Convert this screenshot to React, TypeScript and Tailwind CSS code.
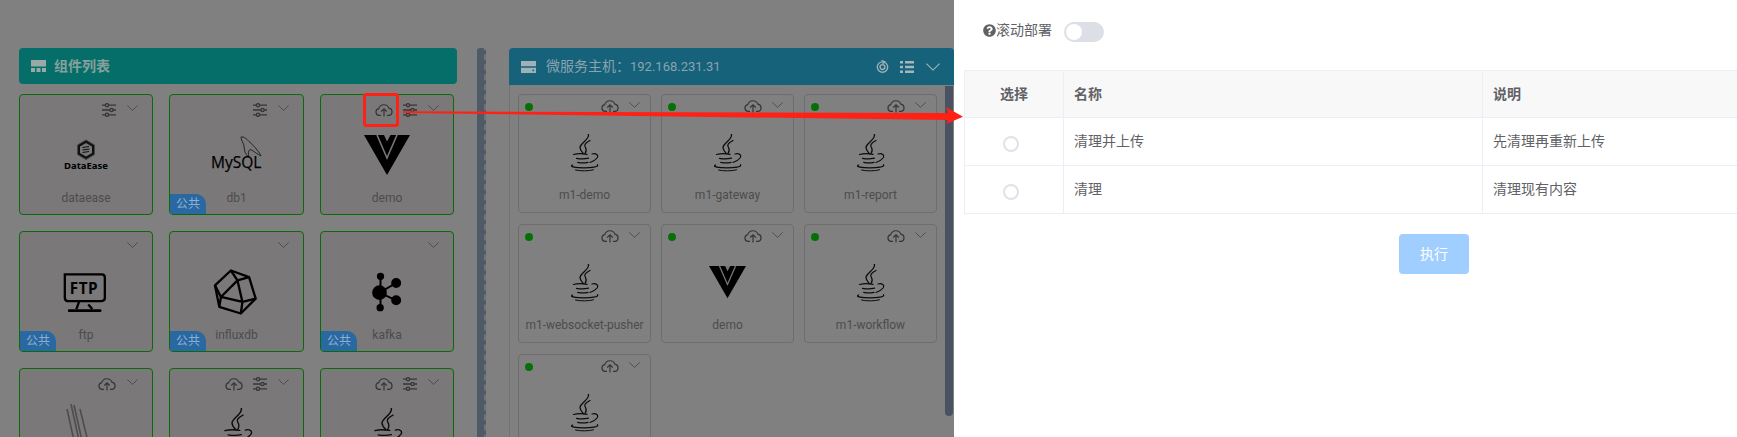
import { FaQuestionCircle } from 'react-icons/fa'

const font = 'font-["Roboto","Noto_Sans_CJK_SC",sans-serif]'

function Cloud({ className = 'w-[18px] h-[14px]' }: { className?: string }) {
    return (
        <svg viewBox="0 0 24 18" className={className} fill="none" stroke="#363636" strokeWidth="1.6">
            <path d="M8 16.2H5.5A4.6 4.6 0 0 1 5 7.1 7.2 7.2 0 0 1 18.6 6.6 4.9 4.9 0 0 1 19 16.2H16" />
            <path d="M12 17.5V7.5M8.3 11L12 7.3 15.7 11" />
        </svg>
    )
}

function Tune() {
    return (
        <svg viewBox="0 0 14 14" className="w-[14px] h-[14px]" fill="none" stroke="#363636" strokeWidth="1.3">
            <path d="M0 2.2H14M0 7H14M0 11.8H14" />
            <circle cx="5" cy="2.2" r="1.6" fill="#777" />
            <circle cx="9.5" cy="7" r="1.6" fill="#777" />
            <circle cx="5" cy="11.8" r="1.6" fill="#777" />
        </svg>
    )
}

function Chevron({ className = 'w-[11px] h-[6px]', color = '#4a4a4a' }: { className?: string; color?: string }) {
    return (
        <svg viewBox="0 0 11 6" className={className} fill="none" stroke={color} strokeWidth="0.9">
            <path d="M0.3 0.4L5.5 5.4 10.7 0.4" />
        </svg>
    )
}

function Java({ w = 29 }: { w?: number }) {
    return (
        <svg viewBox="0 0 29 38" width={w} height={(w * 38) / 29} fill="none" stroke="#0b0b0b" strokeLinecap="round">
            <path strokeWidth="1.3" d="M18.3 0C20.5 5 10 9 10 13.5 10 16 12 18 13.3 19.5" />
            <path strokeWidth="1.2" d="M20 6.5C16 8.5 14 10.5 15 12.5 16 14.5 17.5 16 15 19.5" />
            <path strokeWidth="1.2" d="M3.5 20.5C7 19.6 13 19.6 17 20.3" />
            <path strokeWidth="1.2" d="M6.5 24.3C10 25 15 25 18.5 24.2" />
            <path strokeWidth="1.2" d="M7.7 28.3C11 29 15 29 18 28.3" />
            <path strokeWidth="1.2" d="M22 20C26 18.8 29 21 27 24 25.5 26 23 27.5 20 28.5" />
            <path strokeWidth="1.3" d="M2.5 31C-1 33 6 33.8 14 33.8 21 33.8 29 33 27.5 30.8" />
            <path strokeWidth="1" d="M5.5 36C10 37.2 19 37.2 23.5 35.8" />
        </svg>
    )
}

function Vue({ w = 46 }: { w?: number }) {
    return (
        <svg viewBox="0 0 46 40" width={w} height={(w * 40) / 46}>
            <path d="M0 0H46L23 40Z" fill="#000" />
            <path d="M13 0L23 23 33 0" fill="none" stroke="#777" strokeWidth="1.6" />
            <path d="M20 0L23 6.5 26.5 0Z" fill="#777" />
        </svg>
    )
}

function DataEase() {
    return (
        <svg viewBox="0 0 44 32" width="44" height="32">
            <path d="M22 1L30.5 6V15.5L22 20.5 13.5 15.5V6Z" fill="#111" stroke="#444" strokeWidth="1" />
            <path d="M22 4L28 7.5V14L22 17.5 16 14V7.5Z" fill="#777" />
            <path d="M18.5 8.5L25 7.5M18.5 11L25.5 10M18.5 13.5L25 12.5" stroke="#111" strokeWidth="1.2" />
            <text x="22" y="30" textAnchor="middle" fontSize="9.5" fontWeight="700" fill="#000" className={'font-["Noto_Sans",sans-serif]'}>
                DataEase
            </text>
        </svg>
    )
}

function MySql() {
    return (
        <svg viewBox="0 0 54 38" width="54" height="38">
            <path
                d="M31 1C34 0.5 37 3 39 5.5 42 8 45 11 47 14 49 16 50 18 51 20 49 19 48 18 46 17 44 15.5 42 14 40 13.5 38 15 38 18 39 21 37 20 35 17 34.5 14 34 11 34 9 33 7 32 5 31 3 31 1Z"
                fill="none"
                stroke="#111"
                strokeWidth="0.8"
            />
            <text x="1" y="32" fontSize="15.5" fill="#000" stroke="#000" strokeWidth="0.25" className={'font-["Open_Sans",sans-serif]'}>
                MySQL
            </text>
        </svg>
    )
}

function Ftp() {
    return (
        <svg viewBox="25 15 135 130" width="45" height="43" fill="none" stroke="#000" strokeWidth="7" className="-ml-[4px]">
            <path d="M48 106H42Q33 106 33 96V25H144Q154 25 154 35V97Q154 106 144 106H48" />
            <path d="M76 108L68 130M104 116L116 130" />
            <path d="M46 135H140" strokeWidth="8" strokeLinecap="round" />
            <text x="91" y="84" textAnchor="middle" fontSize="46" fontWeight="700" fill="#000" stroke="none" letterSpacing="2" className={'font-["Open_Sans",sans-serif]'}>
                FTP
            </text>
        </svg>
    )
}

function Influx() {
    return (
        <svg viewBox="470 5 145 150" width="48" height="50" fill="none" stroke="#000" strokeWidth="7" strokeLinejoin="round" className="-ml-[4px]">
            <path d="M530 15L585 35 605 100 560 145 495 125 482 60Z" />
            <path d="M530 15L550 45 585 35M550 45L500 95 482 60M500 95L495 125M500 95L565 110 605 100M565 110L560 145M550 45L565 110" />
        </svg>
    )
}

function Kafka() {
    return (
        <svg viewBox="950 20 95 120" width="32" height="40" fill="#000" stroke="#000" strokeWidth="6">
            <path d="M978 33V127M975 82L1025 53M975 82L1025 105" fill="none" />
            <circle cx="975" cy="82" r="19" />
            <circle cx="978" cy="33" r="8" />
            <circle cx="1025" cy="53" r="12" />
            <circle cx="1025" cy="105" r="12" />
            <circle cx="977" cy="127" r="8" />
        </svg>
    )
}

function Strokes() {
    return (
        <svg viewBox="0 0 26 50" width="26" height="50" fill="none" stroke="#4d4d4d" strokeWidth="1.6" className="mr-[14px]">
            <path d="M1 5L11 50M5 0L16 50M8 1L19 50M14 5L25 50" />
        </svg>
    )
}

type Comp = { id: string; name?: string; logo: React.ReactNode; cloud?: boolean; tune?: boolean; shared?: boolean }

// the last row runs past the bottom of the window, its names are out of view
const components: Comp[] = [
    { id: 'dataease', name: 'dataease', logo: <DataEase />, tune: true },
    { id: 'db1', name: 'db1', logo: <MySql />, tune: true, shared: true },
    { id: 'demo', name: 'demo', logo: <Vue />, cloud: true, tune: true },
    { id: 'ftp', name: 'ftp', logo: <Ftp />, shared: true },
    { id: 'influxdb', name: 'influxdb', logo: <Influx />, shared: true },
    { id: 'kafka', name: 'kafka', logo: <Kafka />, shared: true },
    { id: 'r3a', logo: <Strokes />, cloud: true },
    { id: 'r3b', logo: <Java w={32} />, cloud: true, tune: true },
    { id: 'r3c', logo: <Java w={32} />, cloud: true, tune: true },
]

const services: { id: string; name?: string; logo: React.ReactNode }[] = [
    { id: 's1', name: 'm1-demo', logo: <Java /> },
    { id: 's2', name: 'm1-gateway', logo: <Java /> },
    { id: 's3', name: 'm1-report', logo: <Java /> },
    { id: 's4', name: 'm1-websocket-pusher', logo: <Java /> },
    { id: 's5', name: 'demo', logo: <Vue w={37} /> },
    { id: 's6', name: 'm1-workflow', logo: <Java /> },
    { id: 's7', logo: <Java /> },
]

function ComponentCard({ item }: { item: Comp }) {
    return (
        <div className="relative flex h-[121px] flex-col overflow-hidden rounded-[4px] border border-[#0b6b0b] bg-[#7a7878]">
            <div className="flex h-[26px] items-start justify-end gap-[10px] pr-[14px] pt-[8px]">
                {item.cloud && <Cloud />}
                {item.tune && <Tune />}
                <div className="ml-[1px] pt-[2px]">
                    <Chevron />
                </div>
            </div>
            <div className="flex flex-1 items-center justify-center">{item.logo}</div>
            <div className="mb-[7px] h-[18px] text-center text-[12px] leading-[18px] text-[#4c4c4c]">{item.name}</div>
            {item.shared && (
                <div className="absolute bottom-0 left-0 h-[20px] w-[36px] rounded-tr-[10px] bg-[#2a68a2] text-center text-[12px] leading-[20px] text-[#8eb0d0]">
                    公共
                </div>
            )}
        </div>
    )
}

function ServiceCard({ name, logo }: { name?: string; logo: React.ReactNode }) {
    return (
        <div className="flex h-[119px] flex-col rounded-[4px] border border-[#6d6d6d]">
            <div className="flex h-[24px] items-start pl-[6px] pr-[10px] pt-[4px]">
                <div className="mt-[4px] size-[8px] rounded-full bg-[#067006]" />
                <div className="ml-auto">
                    <Cloud />
                </div>
                <div className="ml-[10px] pt-[3px]">
                    <Chevron />
                </div>
            </div>
            <div className="flex flex-1 items-center justify-center">{logo}</div>
            <div className="mb-[8px] h-[18px] text-center text-[12px] leading-[18px] whitespace-nowrap text-[#4c4c4c]">{name}</div>
        </div>
    )
}

function Radio() {
    return (
        <div className="flex justify-center pr-[6px] pt-[4px]">
            <div className="size-[16px] rounded-full border-2 border-[#dfe3e9] bg-white" />
        </div>
    )
}

function App() {
    return (
        <div className={`relative flex h-[437px] w-[1737px] overflow-hidden bg-[#808080] ${font}`}>
            <div className="ml-[19px] mt-[48px] w-[438px] shrink-0">
                <div className="flex h-[36px] items-center gap-[8px] rounded-[4px] bg-[#066e68] pl-[12px] text-[14px] font-bold text-[#85a09d]">
                    <svg viewBox="0 0 15 12" className="w-[15px] h-[12px]" fill="#9aa8a6">
                        <path d="M0 0H15V6.5H0ZM0 8H4V12H0ZM5.5 8H9.5V12H5.5ZM11 8H15V12H11Z" />
                    </svg>
                    组件列表
                </div>
                <div className="mt-[10px] grid grid-cols-[134px_135px_134px] gap-[16px]">
                    {components.map((c) => (
                        <ComponentCard key={c.id} item={c} />
                    ))}
                </div>
            </div>

            <div className="ml-[20px] mt-[48px] h-[389px] w-[9px] shrink-0 rounded-t-[3px] border-r-2 border-dashed border-r-[#727272] bg-[#4f5a69]" />

            <div className="ml-[23px] mt-[48px] w-[445px] shrink-0">
                <div className="flex h-[37px] items-center rounded-t-[4px] bg-[#16627b] pl-[12px] pr-[14px] text-[14px] text-[#8ba3ad]">
                    <svg viewBox="0 0 15 12" className="mr-[10px] w-[15px] h-[12px]" fill="#9fb0b7">
                        <path d="M0 0H15V5.3H0ZM0 6.7H15V12H0Z" />
                        <circle cx="12.3" cy="9.4" r="0.9" fill="#16627b" />
                    </svg>
                    微服务主机：<span className="text-[13px]">192.168.231.31</span>
                    <svg viewBox="0 0 14 14" className="ml-auto w-[13px] h-[13px]" fill="none" stroke="#9fb0b7" strokeWidth="1.5">
                        <circle cx="7" cy="7.6" r="5.6" />
                        <circle cx="7" cy="7.6" r="2.6" />
                        <path d="M6 0.5L9.5 2 7 4" />
                    </svg>
                    <svg viewBox="0 0 14 12" className="ml-[11px] w-[14px] h-[12px]" fill="#a4b5bc">
                        <path d="M0 0H3V2.6H0ZM5 0H14V2.6H5ZM0 4.7H3V7.3H0ZM5 4.7H14V7.3H5ZM0 9.4H3V12H0ZM5 9.4H14V12H5Z" />
                    </svg>
                    <div className="ml-[12px]">
                        <Chevron className="w-[14px] h-[8px]" color="#a4b5bc" />
                    </div>
                </div>
                <div className="flex border-l border-[#737373]">
                    <div className="grid h-[352px] w-[435px] shrink-0 grid-cols-[133px_133px_133px] content-start gap-x-[10px] gap-y-[11px] pl-[8px] pt-[9px]">
                        {services.map((s) => (
                            <ServiceCard key={s.id} name={s.name} logo={s.logo} />
                        ))}
                    </div>
                    <div className="mt-[1px] h-[330px] w-[8px] rounded-b-[4px] bg-[#4a5160]" />
                </div>
            </div>

            <div className="relative flex-1 overflow-hidden bg-white pl-[10px]">
                <div className="flex h-[70px] items-start pl-[19px] pt-[22px]">
                    <div className="flex h-[16px] items-center text-[14px] text-[#606266]">
                        <FaQuestionCircle className="size-[13px] text-[#606266]" />
                        滚动部署
                    </div>
                    <div className="ml-[12px] flex h-[20px] w-[40px] items-center rounded-full bg-[#dcdfe6] pl-[2px]">
                        <div className="size-[16px] rounded-full bg-white" />
                    </div>
                </div>
                <div className="w-[940px]">
                    <table className="w-full table-fixed border-collapse text-[14px] text-[#606266]">
                        <colgroup>
                            <col className="w-[99px]" />
                            <col className="w-[419px]" />
                            <col />
                        </colgroup>
                        <thead>
                            <tr className="h-[47px] bg-[#f8f8f9] font-bold">
                                <th className="border border-[#ebeef5] text-center">选择</th>
                                <th className="border border-[#ebeef5] pl-[10px] text-left">名称</th>
                                <th className="border border-[#ebeef5] pl-[10px] text-left">说明</th>
                            </tr>
                        </thead>
                        <tbody>
                            <tr className="h-[48px]">
                                <td className="border border-[#ebeef5]">
                                    <Radio />
                                </td>
                                <td className="border border-[#ebeef5] pl-[10px]">清理并上传</td>
                                <td className="border border-[#ebeef5] pl-[10px]">先清理再重新上传</td>
                            </tr>
                            <tr className="h-[48px]">
                                <td className="border border-[#ebeef5]">
                                    <Radio />
                                </td>
                                <td className="border border-[#ebeef5] pl-[10px]">清理</td>
                                <td className="border border-[#ebeef5] pl-[10px]">清理现有内容</td>
                            </tr>
                        </tbody>
                    </table>
                    <div className="mt-[20px] flex justify-center">
                        <button className="h-[40px] w-[70px] rounded-[4px] bg-[#a0cfff] text-[14px] text-white">执行</button>
                    </div>
                </div>
            </div>

            <svg className="pointer-events-none absolute inset-0 h-full w-full" viewBox="0 0 1737 437">
                <rect x="364.5" y="94.5" width="33" height="31" rx="2" fill="none" stroke="#ff2116" strokeWidth="3" />
                <path d="M403 111.3L948 113 946 107 963 116.7 946 124 948 120 403 113Z" fill="#ff2116" />
            </svg>
        </div>
    )
}

export default App
